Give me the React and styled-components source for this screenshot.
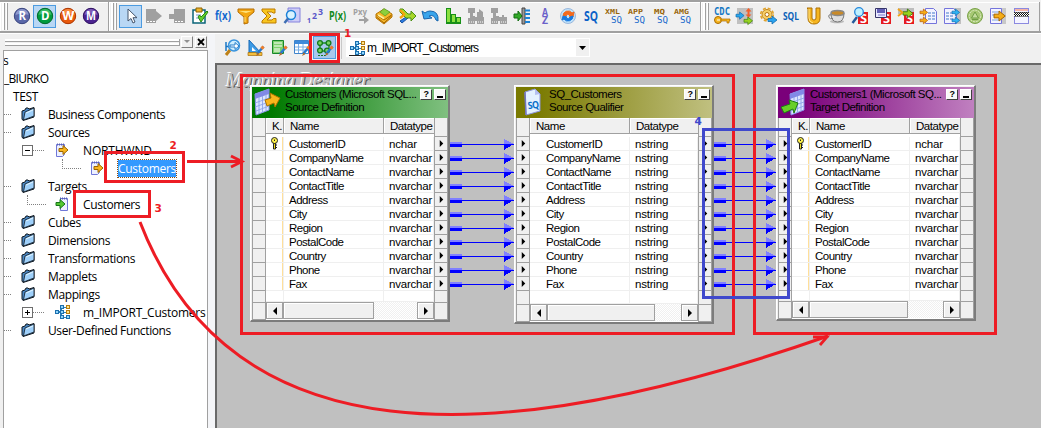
import React from "react";
import styled, { createGlobalStyle } from "styled-components";

const Global = createGlobalStyle`
  * { box-sizing: border-box; }
  body { margin: 0; overflow: hidden; background: #f0f0f0; }
  svg { display: block; flex: none; overflow: visible; }
`;

const RED = "#ed1c24";
const UI = `"Open Sans", "Noto Sans", sans-serif`;
const SANS = `"Liberation Sans", Arial, sans-serif`;

/* ---------- shell ---------- */
const Shell = styled.div`
  position: relative;
  width: 1041px;
  height: 428px;
  overflow: hidden;
  display: flex;
  flex-direction: column;
  background: #f0f0f0;
  color: #000;
  font: 12px ${UI};
`;
const TopEdge = styled.div`
  flex: none;
  height: 2px;
  width: 881px;
  background: #a0a0a0;
`;
const ToolRow = styled.div`
  flex: none;
  display: flex;
  height: 30px;
  border-bottom: 1px solid #a0a0a0;
`;
const RowEdge = styled.div`
  flex: none;
  height: 2px;
  border-top: 1px solid #a0a0a0;
  background: #fff;
`;
const Bar = styled.div`
  display: flex;
  align-items: center;
  width: ${(p) => p.$w}px;
  padding: 0 0 1px 2px;
  border-right: 1px solid #a0a0a0;
  box-shadow: inset 1px 1px #fff;
`;
const Grip = styled.div`
  flex: none;
  width: 6px;
  height: 27px;
  margin-right: ${(p) => p.$gap}px;
  border: solid #a0a0a0;
  border-width: 0 1px 0 0;
  background: linear-gradient(90deg, #fff 0 2px, #a0a0a0 2px 3px, #f0f0f0 3px 4px, #fff 4px);
`;
const Slot = styled.div`
  flex: none;
  width: 23px;
  height: 23px;
  display: flex;
  align-items: center;
  justify-content: center;
  background: ${(p) => (p.$on ? (p.$deep ? "#a9c8ec" : "#b9d7f4") : "transparent")};
  border: ${(p) => (p.$on ? "1px solid #4c9be0" : "0")};
`;
const Main = styled.div`
  flex: 1;
  min-height: 0;
  display: flex;
`;

/* ---------- navigator ---------- */
const Side = styled.div`
  flex: none;
  width: 215px;
  display: flex;
  flex-direction: column;
  padding: 0 7px 0 3px;
  background: linear-gradient(90deg, #f0f0f0 208px, #f4f5f8 208px);
`;
const SideHead = styled.div`
  flex: none;
  height: 16px;
  display: flex;
  align-items: center;
  padding-left: 2px;
`;
const SideGrip = styled.div`
  width: 175px;
  height: 7px;
  background: linear-gradient(#fff 0 2px, #a0a0a0 2px 3px, #f0f0f0 3px 4px, #fff 4px 6px, #a0a0a0 6px);
  border-right: 1px solid #a0a0a0;
`;
const TinyButton = styled.div`
  width: 12px;
  height: 12px;
  margin-left: ${(p) => p.$gap}px;
  display: flex;
  align-items: center;
  justify-content: center;
  border: 1px solid;
  border-color: #fff #808080 #808080 #fff;
`;
const Tree = styled.div`
  flex: 1;
  border: solid #a0a0a0;
  border-width: 1px 1px 0 1px;
  background: #fff;
  overflow: hidden;
`;
const TreeRow = styled.div`
  height: 18px;
  display: flex;
  align-items: center;
  padding-left: ${(p) => p.$pad || 0}px;
  white-space: nowrap;
`;
const Dots = styled.div`
  flex: none;
  width: ${(p) => p.$w}px;
  margin-right: ${(p) => p.$gap}px;
  height: ${(p) => (p.$elbow ? 10 : 1)}px;
  align-self: ${(p) => (p.$elbow ? "flex-start" : "center")};
  border-bottom: 1px dotted #808080;
  border-left: ${(p) => (p.$elbow ? "1px dotted #808080" : "0")};
`;
const TreeText = styled.span`
  margin-left: ${(p) => p.$gap}px;
  letter-spacing: ${(p) => p.$ls ?? -0.38}px;
  line-height: 17px;
  color: ${(p) => (p.$sel ? "#fff" : "#000")};
  background: ${(p) => (p.$sel ? "#3399ff" : "none")};
  outline: ${(p) => (p.$sel ? "1px dotted #8a4b10" : "0")};
`;

/* ---------- designer ---------- */
const Designer = styled.div`
  flex: 1;
  min-width: 0;
  display: flex;
  flex-direction: column;
`;
const DesignBar = styled.div`
  flex: none;
  height: 29px;
  display: flex;
  align-items: center;
  padding: 0 0 2px 6px;
`;
const Divider = styled.div`
  width: 1px;
  height: 22px;
  margin: 0 4px 0 5px;
  background: #c8c8c8;
`;
const Combo = styled.div`
  width: 244px;
  height: 19px;
  display: flex;
  align-items: center;
  padding-left: 4px;
  background: #fff;
`;
const ComboText = styled.span`
  flex: 1;
  margin-left: 2px;
  font: 12px ${SANS};
  letter-spacing: -0.93px;
`;
const ComboArrow = styled.div`
  width: 13px;
  height: 17px;
  margin-right: 1px;
  display: flex;
  align-items: center;
  justify-content: center;
  background: #f0f0f0;
`;
const Canvas = styled.div`
  position: relative;
  flex: 1;
  border: solid #696969;
  border-width: 2px 0 0 2px;
  background: #c0c0c0;
  overflow: hidden;
`;
const Watermark = styled.div`
  padding: 3px 0 0 9px;
  font: italic 20px/24px "Liberation Serif", serif;
  letter-spacing: -0.45px;
  color: #b8b8b8;
  text-shadow: -1px -1px #fff, 1px 1px #555;
`;
const Wires = styled.svg`
  position: absolute;
  left: 0;
  top: 0;
`;

/* ---------- table node ---------- */
const Node = styled.div`
  position: absolute;
  left: ${(p) => p.$x - 217}px;
  top: ${(p) => p.$y - 65}px;
  width: ${(p) => p.$w}px;
  height: ${(p) => p.$h}px;
  display: flex;
  flex-direction: column;
  padding: 1px 0 0 1px;
  border: solid;
  border-width: 1px 2px 2px 1px;
  border-color: #fff #7c7c7c #7c7c7c #fff;
  background: #f0f0f0;
  font: 11.5px ${SANS};
  letter-spacing: -0.5px;
`;
const Head = styled.div`
  flex: none;
  height: 31px;
  display: flex;
  background: linear-gradient(90deg, ${(p) => p.$from} 10%, ${(p) => p.$to});
`;
const HeadIcon = styled.div`
  width: ${(p) => p.$w}px;
  padding: 1px 0 0 2px;
`;
const HeadText = styled.div`
  flex: 1;
  line-height: 13px;
  padding-top: 1px;
  white-space: nowrap;
  letter-spacing: -0.5px;
`;
const HeadButton = styled.div`
  width: 12px;
  height: 11px;
  margin: 2px 2px 0 0;
  display: flex;
  align-items: center;
  justify-content: center;
  font: bold 9px/9px ${SANS};
  background: #f8f8f8;
  border: 1px solid;
  border-color: #fff #404040 #404040 #fff;
`;
const Dash = styled.i`
  width: 6px;
  height: 2px;
  margin-top: 4px;
  background: #000;
`;
const Body = styled.div`
  flex: 1;
  min-height: 0;
  display: flex;
`;
const Gutter = styled.div`
  flex: none;
  width: ${(p) => p.$w}px;
  display: flex;
  flex-direction: column;
  border: solid #a0a0a0;
  border-width: 0 1px;
`;
const GutterCell = styled.div`
  flex: ${(p) => (p.$h ? "none" : 1)};
  height: ${(p) => (p.$h ? p.$h + "px" : "auto")};
  display: flex;
  align-items: center;
  justify-content: center;
  border-bottom: 1px solid #a0a0a0;
`;
const Grid = styled.div`
  flex: 1;
  min-width: 0;
  display: flex;
  flex-direction: column;
  background: #fff;
`;
const GridHead = styled.div`
  flex: none;
  display: flex;
  height: 16px;
  margin-bottom: 3px;
`;
const HCell = styled.div`
  width: ${(p) => (p.$w ? p.$w + "px" : "auto")};
  flex: ${(p) => (p.$w ? "none" : 1)};
  padding-left: ${(p) => p.$pad}px;
  line-height: 17px;
  white-space: nowrap;
  letter-spacing: -0.45px;
  background: #f0f0f0;
  border: solid #a0a0a0;
  border-width: 0 1px 1px 0;
  box-shadow: inset 1px 1px #fff;
  &:last-child { border-right-width: 0; }
`;
const GRow = styled.div`
  flex: none;
  height: 14px;
  display: flex;
`;
const Cell = styled.div`
  width: ${(p) => (p.$w ? p.$w + "px" : "auto")};
  flex: ${(p) => (p.$w ? "none" : 1)};
  padding-left: ${(p) => p.$pad || 0}px;
  line-height: 14px;
  border-right: 1px solid #efefef;
  border-bottom: 1px solid #efefef;
  box-shadow: ${(p) => (p.$mark ? "inset -1px 0 #ffdf9a" : "none")};
  white-space: nowrap;
  &:last-child { letter-spacing: -0.2px; }
`;
const Blank = styled.div`
  flex: 1;
  display: flex;
`;
const Scroll = styled.div`
  flex: none;
  height: 17px;
  display: flex;
  margin-bottom: 1px;
  background: repeating-conic-gradient(#f0f0f0 0 25%, #fff 0 50%) 0 0 / 2px 2px;
`;
const ScrollPart = styled.div`
  width: ${(p) => p.$w}px;
  margin-left: ${(p) => (p.$end ? "auto" : 0)};
  display: flex;
  align-items: center;
  justify-content: center;
  background: #f0f0f0;
  border: 1px solid #a0a0a0;
  box-shadow: inset 1px 1px #fff;
`;

/* ---------- annotations ---------- */
const Notes = styled.svg`
  position: absolute;
  left: 0;
  top: 0;
  pointer-events: none;
`;

/* ---------- small drawings ---------- */
const Svg = ({ s = 18, children, ...r }) => (
  <svg width={s} height={s} viewBox="0 0 18 18" {...r}>{children}</svg>
);
const T = ({ x, y, w, size, fill, children, mono, weight = "bold" }) => (
  <text x={x} y={y} textLength={w} lengthAdjust="spacingAndGlyphs" fontSize={size} fontWeight={weight} fill={fill}
    fontFamily={mono ? '"DejaVu Sans Mono", monospace' : '"Open Sans", sans-serif'}>{children}</text>
);
const Ball = ({ letter, c, dark, light, x, w }) => (
  <Svg s={18}>
    <circle cx="9" cy="9" r="7.700" fill={c} stroke={dark} />
    <path d="M2.500 8a6.500 6 0 0 1 13 0q-6.500 -3 -13 0z" fill={light} opacity=".65" />
    <T x={x} y="13.200" w={w} size="11.500" fill="#fff">{letter}</T>
  </Svg>
);
const Cursor = () => (
  <Svg><path d="M6 2v12l3-2.500 2 4.500 2-1-2-4.300h4z" fill="#fff" stroke="#44546c" /></Svg>
);
const TagRight = () => (
  <Svg><path d="M1 2h10v2l6 5-6 5v2H1z" fill="#a0a0a0" /><path d="M2 14.500h9" stroke="#fff" strokeDasharray="2 1" /></Svg>
);
const TagLeft = () => (
  <Svg><path d="M6 2h11v14H6v-4H1V7h5z" fill="#a0a0a0" /><path d="M7 14.500h9" stroke="#fff" strokeDasharray="2 1" /></Svg>
);
const Clipboard = () => (
  <Svg>
    <path d="M2 3h12v13H2z" fill="#fff" stroke="#0a6478" strokeWidth="1.500" />
    <path d="M5 1h6v4H5z" fill="#efb62c" stroke="#8f6200" />
    <path d="M5 8h5M5 11h3" stroke="#7398d0" />
    <path d="M7 10l3 5 7-10-1-1-6 6-1.500-2z" fill="#62cf2d" stroke="#27880f" />
  </Svg>
);
const Fx = () => <Svg><T x="1" y="13" w="16" size="13" fill="#1268cf">f(x)</T></Svg>;
const Funnel = () => (
  <Svg><path d="M1 2h16v3l-6 5v6l-4 1v-7L1 5z" fill="#f3a712" stroke="#b56f04" /><path d="M2 4h13l-6 2z" fill="#ffe27a" /><path d="M8 10v5" stroke="#ffe27a" /></Svg>
);
const Sigma = () => (
  <Svg><path d="M2 2h13v4h-2l-1-1H7l4 4-4 4h5l1.500-1.500H16V16H2v-2l5-5-5-5z" fill="#f8c51f" stroke="#bd7b00" /></Svg>
);
const LensSheet = () => (
  <Svg><path d="M5 1h12v14H5z" fill="#cfcdf7" stroke="#8482dc" /><circle cx="8" cy="8" r="4.500" fill="#d8f3ff" stroke="#1c83d9" strokeWidth="1.500" /><path d="M5 11.500L1.500 16" stroke="#3e6eb4" strokeWidth="2.500" /></Svg>
);
const Numbers = () => (
  <Svg><T x="1" y="16" w="4" size="7" fill="#5a57c8">1</T><T x="6" y="12" w="5" size="8" fill="#5a57c8">2</T><T x="12" y="8" w="5" size="8" fill="#5a57c8">3</T></Svg>
);
const Px = () => <Svg><T x="0" y="13" w="17" size="12" fill="#128a1c">P(x)</T></Svg>;
const Pxy = () => (
  <Svg><T x="1" y="8" w="14" size="8.500" fill="#a0a0a0">Pxy</T><path d="M7 12h5V9l5 4-5 4v-3H7z" fill="#a0a0a0" /></Svg>
);
const Cube = () => (
  <Svg><path d="M1 7l8-5 8 5v3l-8 7-8-6z" fill="#f6b929" stroke="#b87400" /><path d="M1.500 10l7.500 6 7.500-7M1.500 8l7.500 5 7.500-5" stroke="#a76400" fill="none" /><path d="M5 5l4-3.500 6 3.500-5 4z" fill="#8bcf3c" stroke="#4f8f1c" strokeWidth=".6" /><path d="M3 8l6 3.500" stroke="#fff0a0" strokeWidth="1.500" /></Svg>
);
const Router = () => (
  <Svg><path d="M2 14l6-4 2 1-6 5z" fill="#2c7be2" stroke="#1552a0" /><path d="M2 2l3 0 5 5h3V4l5 5-5 5v-3H8L2 5z" fill="#a8d62a" stroke="#4a8f13" /><path d="M2 3l5 5M2 11l4-3" stroke="#f7a30c" strokeWidth="2.200" /></Svg>
);
const Undo = () => (
  <Svg><path d="M1 4l2 8 8-1-3-2q5-2 7 4l2 1q1-10-8-10-3 0-5 2z" fill="#39a5ec" stroke="#1764ad" /></Svg>
);
const Bars = () => (
  <Svg shapeRendering="crispEdges"><path d="M2 16h15" stroke="#189018" strokeWidth="1.500" /><path d="M2.500 1.500h4v14h-4zM7.500 7.500h4v8h-4zM12.500 10.500h4v5h-4z" fill="#8be040" stroke="#189018" /></Svg>
);
const GreyUnion = ({ flip }) => (
  <Svg><path d={flip ? "M1 1h7v5H6v3h3v1h3V8h2v2h3v7h-7v-3H8v3H1v-6h2V6H1z" : "M1 1h7v5H6v3h2v1h2V5h2V2l4 3v5h1v7h-7v-3H8v3H1v-6h2V6H1z"} fill="#a0a0a0" /><path d="M2 15h6M11 15h5" stroke="#fff" strokeDasharray="1 1" /></Svg>
);
const Normalizer = () => (
  <Svg><path d="M9 1h3v16H9z" fill="#999" stroke="#444" /><path d="M1 7h4V4l4 5-4 5v-3H1z" fill="#32a928" stroke="#136e12" /><path d="M12 3.500h5M12 7h5M12 11h5M12 15h5" stroke="#1b83d8" strokeWidth="2" /></Svg>
);
const AZ = () => <Svg><T x="6" y="8.500" w="6" size="10" fill="#6b61c9">A</T><T x="6" y="17" w="6" size="10" fill="#6b61c9">Z</T></Svg>;
const Swirl = () => (
  <Svg><circle cx="9" cy="9" r="7.500" fill="#bfe2fb" stroke="#9bb8dc" /><path d="M4 9a5 5 0 0 1 9-3l2-1-1 5-4-1 1-1q-3-2-4 1z" fill="#f36a1d" stroke="#f36a1d" /><path d="M14 9a5 5 0 0 1-9 3l-2 1 1-4 4 1-1 1q3 2 4-1z" fill="#1678df" stroke="#1678df" /></Svg>
);
const SQ = () => <Svg><T x="2" y="14" w="14" size="14" fill="#0b62c8">SQ</T></Svg>;
const KindSQ = ({ k }) => (
  <Svg><T x={k === "MQ" ? 3 : 0} y="7" w={k === "MQ" ? 11 : 15} size="7" mono fill="#98660a">{k}</T><T x="6" y="16" w="11" size="9.500" mono fill="#1668cc" weight="normal">SQ</T></Svg>
);
const Cdc = () => (
  <Svg><T x="1" y="8" w="16" size="10" mono fill="#1678c4">CDC</T><circle cx="5" cy="13" r="3.500" fill="#f6b51e" stroke="#a96a00" /><path d="M8 12h9v2h-1v2h-2v-2H8z" fill="#f6b51e" stroke="#a96a00" strokeWidth=".7" /><path d="M4 13h3" stroke="#fff" /></Svg>
);
const Arrow = ({ x = 0, y = 0, c, d, k = 1 }) => (
  <path transform={`translate(${x} ${y}) scale(${k})`} d="M0 2.500h4V0l5 4-5 4V5.500H0z" fill={c} stroke={d} strokeWidth=".8" />
);
const Exchange = () => (
  <Svg><path d="M1 1h16v16H1z" fill="#c0c0c0" /><Arrow x={0} y={5} c="#27a8ef" d="#126cb0" k={0.9} /><path d="M12.500 1l3 3.500h-2v3h2l-3 3-3-3h2v-3h-2z" fill="#f2602b" /><Arrow x={8} y={10} c="#98d321" d="#45860e" k={0.95} /></Svg>
);
const Gear = () => (
  <Svg><circle cx="8" cy="7.500" r="5" fill="#f6cf68" stroke="#c38418" strokeWidth="1" /><circle cx="8" cy="7.500" r="6.300" fill="none" stroke="#e0a32c" strokeWidth="1.600" strokeDasharray="3 1.950" /><circle cx="8" cy="7.500" r="2" fill="#fff" stroke="#b87510" /><Arrow x={9} y={9} c="#2aa3ef" d="#126cb0" /></Svg>
);
const Sql = () => <Svg><T x="1" y="13" w="16" size="10" fill="#0a62b8">SQL</T></Svg>;
const Ulet = () => (
  <Svg><path d="M2 1h5v10q0 2 2 2t2-2V1h4v10q0 6-6 6t-6-6V2z" fill="#f6b51e" stroke="#ad7104" /><path d="M4 2v9q0 4 4 5" stroke="#ffe68a" fill="none" /></Svg>
);
const Cup = () => (
  <Svg><ellipse cx="9" cy="14.500" rx="7" ry="1.800" fill="#bbb" /><path d="M3 6h13q0 9-6.500 9T3 6z" fill="#dedede" stroke="#777" /><path d="M3 8Q0 7 1 10.500q1 2 4 1" fill="none" stroke="#777" /><ellipse cx="9.500" cy="6" rx="6.500" ry="2.500" fill="#c98a28" stroke="#888" strokeWidth="1.400" /></Svg>
);
const FileS = ({ kind }) => (
  <Svg>
    {kind === 2 && <path d="M1 1h16v6H1z" fill="#bdbdbd" />}
    <path d="M7 5h10v12H7z" fill="#e51b20" /><T x="9" y="16" w="7" size="12" fill="#fff">S</T>
    {kind === 0 && <><path d="M6 10L1.500 16" stroke="#255a9c" strokeWidth="2.500" /><circle cx="8" cy="5" r="4.300" fill="#bff0ff" stroke="#2588dc" strokeWidth="1.300" /></>}
    {kind === 1 && <><path d="M1.500 1.500h11v9h-11z" fill="#e9e9ff" stroke="#36356a" /><path d="M3 2h8v4H3z" fill="#6461b8" /><path d="M4 8h7" stroke="#7b78d0" /></>}
    {kind === 2 && <><Arrow x={6} y={2} c="#9ad11e" d="#3a7910" k={1.1} /><path d="M1 2l5 4M1 9l4-3" stroke="#efa317" strokeWidth="2" /></>}
  </Svg>
);
const Sheet = ({ c, d, side }) => (
  <Svg>
    {side && <path d="M2 1h16v16H2z" fill="#c0c0c0" />}
    <path d={side ? "M1.500 1.500h9l3 3v12h-12z" : "M5.500 1.500h8l3 3v12h-11z"} fill="#f3f3ff" stroke="#7474dc" />
    <path d={side ? "M3 6h8M3 9h8M3 12h8" : "M8 6h7M8 9h7M8 12h7"} stroke="#7da2dc" strokeWidth="1.500" strokeDasharray="3 1" />
    <Arrow x={side ? 9 : 0} y={2} c={c} d={d} k={0.85} /><Arrow x={side ? 9 : 0} y={10} c={c} d={d} k={0.85} />
  </Svg>
);
const Seal = () => (
  <Svg><circle cx="9" cy="9" r="7.500" fill="#a6c873" stroke="#7ba34b" /><circle cx="9" cy="9" r="5.800" fill="none" stroke="#dbe9c4" strokeDasharray="2 1" /><path d="M9 5l3.500 6h-7zM6 12.500h6" stroke="#6f9d45" fill="#c4dc9e" /></Svg>
);
const Export = () => (
  <Svg><path d="M6 1h11v16H6z" fill="#c8c8c8" /><path d="M1.500 1.500h11v15h-11z" fill="#f4f4ff" stroke="#7474dc" /><path d="M3 5h7M3 8h4M3 13h7" stroke="#7da2dc" /><Arrow x={5} y={4} c="#f5ad17" d="#a96800" k={1.250} /></Svg>
);
const Checker = () => (
  <Svg shapeRendering="crispEdges"><path d="M2.500 1.500h14v15h-14z" fill="#f4f4ff" stroke="#8b89e0" /><path d="M3 2h13v2H3z" fill="#f3b3a6" /><path d="M2 5h15v4H2z" fill="#fff" /><path d="M2 5.500h15M2 7.500h15" stroke="#111" strokeDasharray="1 1" /><path d="M3 6.500h14M3 8.500h14" stroke="#111" strokeDasharray="1 1" /><path d="M2 5h15M2 9h15" stroke="#333" strokeWidth=".6" /></Svg>
);
const Pencil = () => (
  <><path d="M16.500 7.500L10 15" stroke="#2579d0" strokeWidth="2.500" /><path d="M16.500 7.500l-2 2.300" stroke="#ef7d27" strokeWidth="3" /><path d="M10.700 13.300L9 17l3.300-1.700z" fill="#b66a21" /></>
);
const SourceTool = () => (
  <Svg><path d="M2 3v9M2 7.500h4" stroke="#1976c4" strokeWidth="1.500" /><path d="M6 11L2 16" stroke="#bd8118" strokeWidth="3" /><circle cx="10" cy="6.500" r="5.500" fill="#cdeeff" stroke="#3994dd" strokeWidth="1.500" /><path d="M6 6h5V3.500l4 3.500-4 3.500V8H6z" fill="#fff" stroke="#237cc9" /></Svg>
);
const Triangle = () => (
  <Svg><path d="M2 1v13h12z" fill="#3d9be6" stroke="#1668b5" /><path d="M5 8v4h4z" fill="#fff" /><path d="M1 13.500h14v3H1z" fill="#f4be3b" stroke="#a66f0b" strokeWidth=".7" /><Pencil /></Svg>
);
const GreenSheet = () => (
  <Svg><path d="M2.500 1.500h11v13h-11z" fill="#7ed06d" stroke="#17872a" /><path d="M4 4h8M4 7h8M4 10h6M4 12h6" stroke="#fff" /><Pencil /></Svg>
);
const BlueGrid = () => (
  <Svg><path d="M1.500 1.500h14v13h-14z" fill="#fff" stroke="#3f84cb" /><path d="M2 2h13v3H2z" fill="#3e8ada" /><path d="M2 8h13M2 11h13M5.500 5v9M10 5v9" stroke="#79aee5" /><Pencil /></Svg>
);
const GreenNodes = () => (
  <Svg><path d="M4 4h9v8H4z" fill="none" stroke="#188c21" strokeWidth="1.500" /><g fill="#7ad35f" stroke="#147a1c" strokeWidth="1.300"><circle cx="4" cy="4" r="2.400" /><circle cx="12.500" cy="4" r="2.400" /><circle cx="4" cy="11.500" r="2.400" /><circle cx="11" cy="11.500" r="2.400" /></g><path d="M2 16.500h8" stroke="#167920" strokeDasharray="2 1" /><Pencil /></Svg>
);
const MapIcon = ({ line }) => (
  <svg width="15" height="16" viewBox="0 0 15 16" shapeRendering="crispEdges">
    <path d="M3 8h9M4 8l4-5h5M4 8l4 5h5" stroke="#2c83bb" fill="none" />
    <g fill="#8fd4fb" stroke="#1b6fae"><path d="M.5 6.500h3v3h-3zM5.500 1.500h3v3h-3zM5.500 6.500h3v3h-3zM5.500 11.500h3v3h-3zM11.500 11.500h3v3h-3z" /></g>
    <path d="M11.500 1.500h3v3h-3zM11.500 6.500h3v3h-3z" fill="#ffe48a" stroke="#b67d10" />
    {line && <path d="M-1 15.500h15" stroke="#222" />}
  </svg>
);
const Folder = () => (
  <svg width="14" height="14" viewBox="0 0 14 14">
    <path d="M1 4l3-1 1-2 2 0 1 1 5-1.500V10L2 13.500 1 12z" fill="#4a88c5" stroke="#101820" />
    <path d="M4 5l9-4v8L2.500 13z" fill="#9fd0fa" stroke="#101820" strokeWidth=".8" />
    <path d="M5 6l7-3" stroke="#e0f4ff" />
  </svg>
);
const SrcIcon = () => (
  <svg width="14" height="14" viewBox="0 0 14 14"><path d="M1.500 1.500h8v10l-2 2h-6z" fill="#edf0ff" stroke="#6f77d8" /><path d="M2 1.500h8" stroke="#5961b4" strokeDasharray="1 1" strokeWidth="2" /><path d="M4 5.500h4V2.500l5 4.500-5 4.500v-3H4z" fill="#f8b51d" stroke="#9a6500" /></svg>
);
const TgtIcon = () => (
  <svg width="14" height="14" viewBox="0 0 14 14"><path d="M5.500 1.500h7v12h-7z" fill="#edf0ff" stroke="#6f77d8" /><path d="M5 1.500h8" stroke="#5961b4" strokeDasharray="1 1" strokeWidth="2" /><path d="M1 5.500h4V2.500L10 7l-5 4.500v-3H1z" fill="#55c832" stroke="#17751b" /></svg>
);
const Expander = ({ plus }) => (
  <svg width="11" height="11" viewBox="0 0 11 11" shapeRendering="crispEdges"><path d="M.5.500h10v10H.5z" fill="#fff" stroke="#6d6d6d" /><path d={plus ? "M3 5.500h5M5.500 3v5" : "M3 5.500h5"} stroke="#000" /></svg>
);
const KeyIcon = () => (
  <svg width="9" height="13" viewBox="0 0 9 13"><path d="M3.500 6h2v6h-2zM5 8h2M5 10.500h2" fill="#f4e21c" stroke="#222" /><circle cx="4.500" cy="3.500" r="3" fill="#fff34a" stroke="#222" /><path d="M4.500 2.500v1.500" stroke="#222" /></svg>
);
const Sheet3d = ({ kind }) => (
  <svg width="28" height="29" viewBox="0 0 28 29">
    {kind === "sq" ? (
      <>
        <path d="M7 4L17 1l5 5v17L8 27z" fill="#e4f2ff" stroke="#8c94da" /><path d="M17 1v6l5-1z" fill="#b4c0f0" /><path d="M7 4l1 23" stroke="#7275be" strokeWidth="1.500" />
        <text x="10" y="21" fontSize="10" fontWeight="bold" fill="#0b6fc9" textLength="11" lengthAdjust="spacingAndGlyphs" transform="rotate(-8 12 20)" fontFamily="Open Sans">SQ</text>
      </>
    ) : (
      <g transform={kind === "tgt" ? "translate(9 0)" : undefined}>
        <path d="M1 6L15 1v21L2 27z" fill="#dde6ff" stroke="#8890e8" /><path d="M1 6L15 1v5L1 11z" fill="#8189e6" />
        <path d="M1 15l14-5M1 19l14-5M2 23l13-5M5 9v17M8.500 8v17M12 6v17" stroke="#8ba3e8" strokeWidth=".9" />
      </g>
    )}
    {kind === "src" && <path d="M11 12l6-2-1-5 10 5-5 9-1-4-7 3z" fill="#f8b61b" stroke="#ad7200" />}
    {kind === "tgt" && <path d="M1 19l9-3-1-4 9 3-4 10-1-4-9 4z" fill="#68cf27" stroke="#1e7b14" />}
  </svg>
);
const Tri = ({ left, s = 8 }) => (
  <svg width={s} height={s} viewBox="0 0 8 8"><path d={left ? "M6 0v8L2 4z" : "M2 0v8l4-4z"} fill="#000" /></svg>
);

/* ---------- data ---------- */
const balls = [
  <Ball letter="R" c="#5a67a8" dark="#39457f" light="#aab4e0" x={5.500} w={7.500} />,
  <Ball letter="D" c="#009b3e" dark="#00682a" light="#59d07e" x={5} w={8.500} />,
  <Ball letter="W" c="#e8590c" dark="#ab3500" light="#ffa560" x={3.200} w={12} />,
  <Ball letter="M" c="#4b2390" dark="#2d1060" light="#9a7cd0" x={4} w={10} />,
];
const transforms = [
  <Cursor />, <TagRight />, <TagLeft />, <Clipboard />, <Fx />, <Funnel />, <Sigma />, <LensSheet />, <Numbers />, <Px />, <Pxy />,
  <Cube />, <Router />, <Undo />, <Bars />, <GreyUnion />, <GreyUnion flip />, <Normalizer />, <AZ />, <Swirl />, <SQ />,
  <KindSQ k="XML" />, <KindSQ k="APP" />, <KindSQ k="MQ" />, <KindSQ k="AMG" />,
];
const extras = [
  <Cdc />, <Exchange />, <Gear />, <Sql />, <Ulet />, <Cup />, <FileS kind={0} />, <FileS kind={1} />, <FileS kind={2} />,
  <Sheet c="#f5ad17" d="#b5560c" />, <Sheet side c="#2db3f3" d="#126cb0" />, <Seal />, <Export />, <Checker />,
];
const names = ["CustomerID", "CompanyName", "ContactName", "ContactTitle", "Address", "City", "Region", "PostalCode", "Country", "Phone", "Fax"];

function TableNode({ x, h, from, to, icon, iconW, title, sub, keyCol, inPort, outPort, type, thumb, namePad }) {
  const gutter = (port) => (
    <Gutter $w={14}>
      <GutterCell $h={19} />
      {names.map((n) => <GutterCell key={n} $h={14}>{port && <Tri s={7} />}</GutterCell>)}
      <GutterCell $h={h - 225} />
      <GutterCell />
    </Gutter>
  );
  return (
    <Node $x={x} $y={85} $w={200} $h={h}>
      <Head $from={from} $to={to}>
        <HeadIcon $w={iconW}><Sheet3d kind={icon} /></HeadIcon>
        <HeadText>{title}<br />{sub}</HeadText>
        <HeadButton>?</HeadButton>
        <HeadButton><Dash /></HeadButton>
      </Head>
      <Body>
        {gutter(inPort)}
        <Grid>
          <GridHead>
            {keyCol && <HCell $w={18} $pad={6}>K.</HCell>}
            <HCell $w={100} $pad={6}>Name</HCell>
            <HCell $pad={6}>Datatype</HCell>
          </GridHead>
          {names.map((n, i) => (
            <GRow key={n}>
              {keyCol && <Cell $w={18} $pad={4} $mark>{i === 0 && <KeyIcon />}</Cell>}
              <Cell $w={100} $pad={namePad}>{n}</Cell>
              <Cell $pad={5}>{type === "nstring" ? type : i === 0 ? "nchar" : "nvarchar"}</Cell>
            </GRow>
          ))}
          <Blank>
            {keyCol && <Cell $w={18} />}
            <Cell $w={100} /><Cell />
          </Blank>
          <Scroll>
            <ScrollPart $w={17}><Tri left /></ScrollPart>
            <ScrollPart $w={thumb} />
            <ScrollPart $w={17} $end><Tri /></ScrollPart>
          </Scroll>
        </Grid>
        {gutter(outPort)}
      </Body>
    </Node>
  );
}

const Link = ({ x1, x2, y }) => (
  <g shapeRendering="crispEdges">
    <path d={`M${x1} ${y}H${x2}`} stroke="#0000ff" />
    <rect x={x1} y={y - 2.500} width="12" height="2" fill="#8080ff" />
    <rect x={x1} y={y - 0.500} width="12" height="3" fill="#0000ff" />
    <path d={`M${x2 - 10} ${y - 5.500}v5h10z`} fill="#8080ff" />
    <path d={`M${x2 - 10} ${y - 0.500}h10l-10 6z`} fill="#0000ff" />
  </g>
);

const FolderRow = ({ children }) => (
  <TreeRow><Dots $w={7} $gap={10} /><Folder /><TreeText $gap={13}>{children}</TreeText></TreeRow>
);

export default function App() {
  return (
    <Shell>
      <Global />
      <TopEdge />
      <ToolRow>
        <Bar $w={109}>
          <Grip $gap={2} />
          {balls.map((b, i) => <Slot key={i} $on={i === 1}>{b}</Slot>)}
        </Bar>
        <Bar $w={592}>
          <Grip $gap={2} />
          {transforms.map((t, i) => <Slot key={i} $on={i === 0}>{t}</Slot>)}
        </Bar>
        <Bar $w={339}>
          <Grip $gap={1} />
          {extras.map((t, i) => <Slot key={i}>{t}</Slot>)}
        </Bar>
      </ToolRow>
      <RowEdge />
      <Main>
        <Side>
          <SideHead>
            <SideGrip />
            <TinyButton $gap={1}><svg width="6" height="4" viewBox="0 0 6 4"><path d="M0 0h6L3 3z" fill="#909090" /></svg></TinyButton>
            <TinyButton $gap={2}><svg width="8" height="8" viewBox="0 0 8 8"><path d="M1 1l6 6M7 1L1 7" stroke="#000" strokeWidth="1.800" /></svg></TinyButton>
          </SideHead>
          <Tree>
            <TreeRow><TreeText $gap={-1}>s</TreeText></TreeRow>
            <TreeRow><TreeText $gap={0} $ls={-0.7}>_BIURKO</TreeText></TreeRow>
            <TreeRow><TreeText $gap={9}>TEST</TreeText></TreeRow>
            <FolderRow>Business Components</FolderRow>
            <FolderRow>Sources</FolderRow>
            <TreeRow $pad={18}><Expander /><Dots $w={11} $gap={11} /><SrcIcon /><TreeText $gap={14} $ls={-0.15}>NORTHWND</TreeText></TreeRow>
            <TreeRow $pad={58}><Dots $elbow $w={19} $gap={9} /><SrcIcon /><TreeText $gap={14} $ls={-0.3} $sel>Customers</TreeText></TreeRow>
            <FolderRow>Targets</FolderRow>
            <TreeRow $pad={23}><Dots $elbow $w={19} $gap={9} /><TgtIcon /><TreeText $gap={14}>Customers</TreeText></TreeRow>
            <FolderRow>Cubes</FolderRow>
            <FolderRow>Dimensions</FolderRow>
            <FolderRow>Transformations</FolderRow>
            <FolderRow>Mapplets</FolderRow>
            <FolderRow>Mappings</FolderRow>
            <TreeRow $pad={18}><Expander plus /><Dots $w={11} $gap={11} /><MapIcon /><TreeText $gap={13} $ls={-0.25}>m_IMPORT_Customers</TreeText></TreeRow>
            <FolderRow>User-Defined Functions</FolderRow>
          </Tree>
        </Side>
        <Designer>
          <DesignBar>
            <Slot><SourceTool /></Slot>
            <Slot><Triangle /></Slot>
            <Slot><GreenSheet /></Slot>
            <Slot><BlueGrid /></Slot>
            <Slot $on $deep><GreenNodes /></Slot>
            <Divider />
            <Combo>
              <MapIcon line />
              <ComboText>m_IMPORT_Customers</ComboText>
              <ComboArrow><svg width="7" height="4" viewBox="0 0 7 4"><path d="M0 0h7L3.500 4z" /></svg></ComboArrow>
            </Combo>
          </DesignBar>
          <Canvas>
            <Watermark>Mapping Designer</Watermark>
            <Wires width="824" height="364" viewBox="217 65 824 364">
              {names.map((n, i) => (
                <g key={n}>
                  <Link x1={450} x2={514} y={144.500 + i * 14} />
                  <Link x1={714} x2={776} y={144.500 + i * 14} />
                </g>
              ))}
            </Wires>
            <TableNode x={250} h={237} from="#007a00" to="#80c080" icon="src" iconW={33} title="Customers (Microsoft SQL..." sub="Source Definition"
              keyCol outPort thumb={91} namePad={5} />
            <TableNode x={514} h={239} from="#7a7a00" to="#c0c080" icon="sq" iconW={33} title="SQ_Customers" sub="Source Qualifier"
              inPort outPort type="nstring" thumb={108} namePad={16} />
            <TableNode x={776} h={236} from="#7a007a" to="#c080c0" icon="tgt" iconW={32} title="Customers1 (Microsoft SQ..." sub="Target Definition"
              keyCol inPort thumb={99} namePad={5} />
          </Canvas>
        </Designer>
      </Main>
      <Notes width="1041" height="428" viewBox="0 0 1041 428" fill="none" stroke={RED} strokeWidth="3">
        <rect x="241.500" y="75.500" width="492" height="258" />
        <rect x="754.500" y="75.500" width="241" height="258" />
        <rect x="310.500" y="34.500" width="28" height="27" />
        <rect x="105.500" y="152.500" width="78" height="29" />
        <rect x="74.500" y="191.500" width="75" height="25" />
        <path d="M187 161.500H241M231 156l11 5.500-11 5.500" strokeWidth="2.800" />
        <path d="M140 222C230 455 489 455 828 336" strokeWidth="3" />
        <path d="M813 337h14l-7 8" strokeWidth="2.800" />
        <rect x="703.500" y="129.500" width="85" height="168" stroke="#3f48cc" />
        <g stroke="none" fill={RED} fontFamily='"DejaVu Sans", sans-serif' fontWeight="bold" fontSize="10.500">
          <text x="344" y="37">1</text>
          <text x="169.500" y="149">2</text>
          <text x="154.500" y="212">3</text>
          <text x="694.500" y="125" fill="#3f48cc">4</text>
        </g>
      </Notes>
    </Shell>
  );
}
